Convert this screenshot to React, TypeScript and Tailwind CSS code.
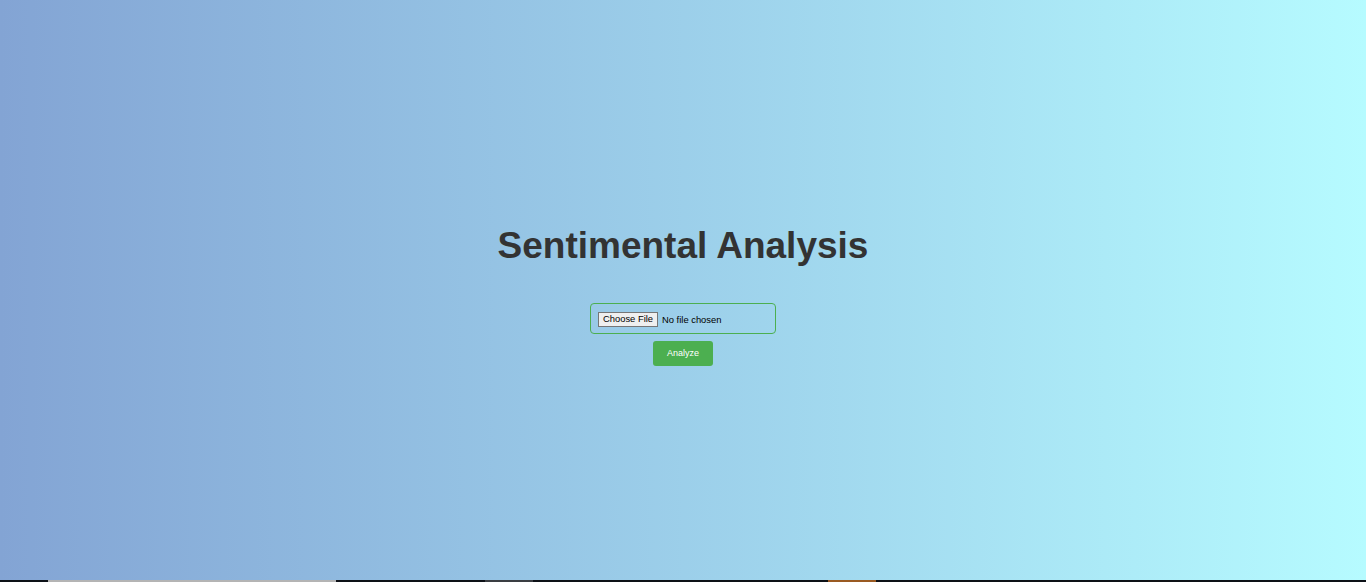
import React from "react";

export default function App() {
  return (
    <div
      className="relative h-[582px] w-full overflow-hidden bg-gradient-to-r from-[#83a4d4] to-[#b6fbff]"
      style={{ fontFamily: '"Liberation Sans", Arial, sans-serif' }}
    >
      <div className="flex h-[580px] flex-col items-center justify-center pt-[11px]">
        <h1 className="text-[37px] font-bold leading-[42px] text-[#333333]">
          Sentimental Analysis
        </h1>
        <div className="mt-[36px] flex h-[31px] w-[186px] items-center rounded-[4px] border border-[#4caf50] px-[7px] pt-[1px]">
          <input
            type="file"
            className="text-[9.4px] text-black file:mr-[4px] file:h-[15px] file:border file:border-[#767676] file:bg-[#efefef] file:px-[4px] file:text-[9.4px] file:leading-none file:text-black"
            style={{ fontFamily: '"Liberation Sans", Arial, sans-serif' }}
          />
        </div>
        <button className="mt-[7px] h-[25px] w-[60px] rounded-[3px] bg-[#4caf50] text-[9px] text-white">
          Analyze
        </button>
      </div>
      <div className="absolute bottom-0 left-0 flex h-[2px] w-full bg-[#0d1117]">
        <div className="ml-[48px] w-[288px] bg-[#b4b4b4]" />
        <div className="ml-[149px] w-[48px] bg-[#3a3d42]" />
        <div className="ml-[295px] w-[48px] bg-[#9a5a22]" />
      </div>
    </div>
  );
}
